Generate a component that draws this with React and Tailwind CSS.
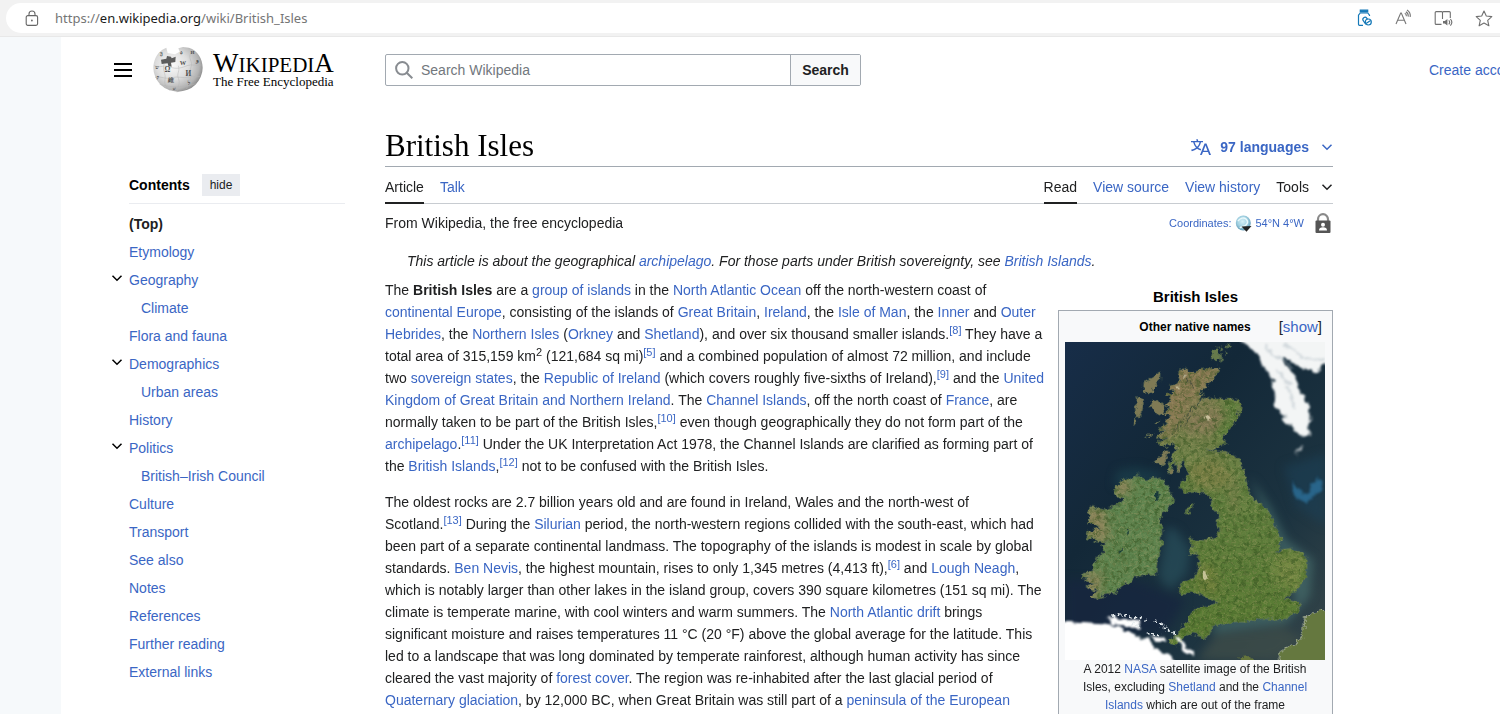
import { useState } from 'react';

const A = ({ children }) => (
  <a href="#" className="text-[#3a66c4] hover:underline">{children}</a>
);

// Keeps a footnote marker on the same line as the word before it
const Ref = ({ n, children }) => (
  <span className="whitespace-nowrap">
    {children}
    <sup className="relative -top-[5px] align-baseline text-[11px] leading-none">
      <a href="#" className="text-[#3a66c4]">[{n}]</a>
    </sup>
  </span>
);

const sections = [
  { title: 'Etymology' },
  { title: 'Geography', children: ['Climate'] },
  { title: 'Flora and fauna' },
  { title: 'Demographics', children: ['Urban areas'] },
  { title: 'History' },
  { title: 'Politics', children: ['British–Irish Council'] },
  { title: 'Culture' },
  { title: 'Transport' },
  { title: 'See also' },
  { title: 'Notes' },
  { title: 'References' },
  { title: 'Further reading' },
  { title: 'External links' },
];

const AddressBar = () => (
  <div className="h-[37px] bg-[#f2f2f2] border-b border-[#e8e8e8] pl-[6px] pt-[3px]">
    <div className="h-[30px] bg-white rounded-l-full rounded-r-md flex items-center pl-[19px] pr-[7px]">
      <LockIcon />
      <div
        role="textbox"
        aria-label="Address"
        contentEditable
        suppressContentEditableWarning
        className="ml-4 pt-px flex-1 outline-none font-['Noto_Sans','Open_Sans',sans-serif] text-[13px] text-[#757575]"
      >
        https://<span className="text-[#1a1a1a]">en.wikipedia.org</span>/wiki/British_Isles
      </div>
      <div className="flex items-center gap-[22px]">
        <button type="button" aria-label="Shopping"><BottleIcon /></button>
        <button type="button" aria-label="Read aloud"><ReadAloudIcon /></button>
        <button type="button" aria-label="Immersive reader"><ReaderIcon /></button>
        <button type="button" aria-label="Add to favorites"><StarIcon /></button>
      </div>
    </div>
  </div>
);

const Header = () => (
  <header className="h-[66px] flex items-center">
    <div className="w-[324px] shrink-0 pl-[53px] flex items-center">
      <button type="button" aria-label="Main menu"><MenuIcon /></button>
      <a href="#" className="ml-[21px] flex items-center gap-[10px] text-black font-['Liberation_Serif',serif]">
        <Globe />
        <span className="flex flex-col">
          <span className="text-[21px] leading-[22px] whitespace-nowrap">
            <span className="text-[27px] leading-[22px]">W</span>IKIPEDI<span className="text-[27px] leading-[22px]">A</span>
          </span>
          <span className="text-[13px] leading-[12px] whitespace-nowrap">The Free Encyclopedia</span>
        </span>
      </a>
    </div>
    <form className="flex-1 max-w-[476px] h-8 flex border border-[#a2a9b1] rounded-[2px]">
      <label className="flex-1 flex items-center pl-[9px] gap-2">
        <SearchIcon />
        <input
          type="search"
          aria-label="Search Wikipedia"
          placeholder="Search Wikipedia"
          className="flex-1 text-[14px] outline-none placeholder:text-[#72777d]"
        />
      </label>
      <button type="submit" className="w-[70px] border-l border-[#a2a9b1] bg-[#f8f9fa] text-[14px] font-bold text-[#202122]">
        Search
      </button>
    </form>
    <a href="#" className="ml-auto w-[71px] shrink-0 text-[14px] whitespace-nowrap text-[#3a66c4]">Create account</a>
  </header>
);

const Contents = () => {
  const [hidden, setHidden] = useState(false);
  return (
    <nav aria-label="Contents" className="w-[284px] shrink-0 pl-[50px] pt-[71px] text-[14px]">
      <div className="ml-[18px] h-[30px] border-b border-[#eaecf0] flex items-start gap-3">
        <h2 className="font-bold leading-[22px] text-black">Contents</h2>
        <button
          type="button"
          onClick={() => setHidden(!hidden)}
          className="h-[22px] px-2 bg-[#eaecf0] text-[12px] text-[#202122]"
        >
          hide
        </button>
      </div>
      {!hidden && (
        <ul className="pt-[6px] leading-[28px]">
          <li className="pl-[18px] font-bold"><a href="#" className="text-[#202122]">(Top)</a></li>
          {sections.map((s) => (
            <li key={s.title}>
              <div className="flex items-center">
                <span className="w-[18px] pb-1">
                  {s.children && (
                    <button type="button" aria-label={`Toggle ${s.title}`} className="block">
                      <Chevron />
                    </button>
                  )}
                </span>
                <A>{s.title}</A>
              </div>
              {s.children && (
                <ul className="pl-[30px]">
                  {s.children.map((c) => (
                    <li key={c}><A>{c}</A></li>
                  ))}
                </ul>
              )}
            </li>
          ))}
        </ul>
      )}
    </nav>
  );
};

const Tab = ({ active, children }) => (
  <a
    href="#"
    className={`-mb-px flex items-center border-b-2 pt-[5px] ${
      active ? 'border-[#202122] text-[#202122]' : 'border-transparent text-[#3a66c4]'
    }`}
  >
    {children}
  </a>
);

const Infobox = () => (
  <aside className="float-right ml-3 mt-[7px] w-[275px] text-center">
    <h2 className="text-[15px] leading-[22px] pb-[2px] font-bold text-black">British Isles</h2>
    <div className="border border-[#a2a9b1] bg-[#f8f9fa] pl-[6px] pr-[7px] pb-3">
      <div className="h-[31px] grid grid-cols-[1fr_auto_1fr] items-center">
        <span />
        <span className="text-[12px] font-bold text-black">Other native names</span>
        <span className="pr-[3px] text-right text-[15px]">
          [<button type="button" className="text-[#3a66c4]">show</button>]
        </span>
      </div>
      <SatelliteMap />
      <p className="px-2 text-[12px] leading-[18px]">
        A 2012 <A>NASA</A> satellite image of the British Isles, excluding <A>Shetland</A> and the{' '}
        <A>Channel Islands</A> which are out of the frame
      </p>
    </div>
  </aside>
);

const Article = () => (
  <main className="flex-1 min-w-0 ml-10 mr-[167px] pt-[22px] text-[14px] leading-[22px] text-[#202122]">
    <div className="h-[42px] border-b border-[#a2a9b1] flex items-center justify-between">
      <h1 className="font-['Liberation_Serif',serif] text-[31px] leading-[38px] text-black">British Isles</h1>
      <button type="button" className="flex items-center pt-[2px] font-bold text-[#3a66c4]">
        <LanguageIcon />
        <span className="ml-[9px] mr-3">97 languages</span>
        <Chevron />
      </button>
    </div>
    <div className="h-[37px] border-b border-[#c8ccd1] flex items-stretch gap-4">
      <Tab active>Article</Tab>
      <Tab>Talk</Tab>
      <div className="flex-1" />
      <Tab active>Read</Tab>
      <Tab>View source</Tab>
      <Tab>View history</Tab>
      <button type="button" className="flex items-center gap-3 pt-1">
        Tools <Chevron />
      </button>
    </div>

    <div className="pt-2 flex items-center justify-between">
      <p>From Wikipedia, the free encyclopedia</p>
      <div className="flex items-center text-[11px]">
        <A>Coordinates:</A>
        <span className="ml-1 mr-[3px]"><CoordGlobe /></span>
        <A>54°N 4°W</A>
        <span className="ml-[11px] mr-[2px]"><PadlockIcon /></span>
      </div>
    </div>

    <p className="mt-4 pl-[22px] italic">
      This article is about the geographical <A>archipelago</A>. For those parts under British sovereignty, see{' '}
      <A>British Islands</A>.
    </p>

    <div className="mt-[7px]">
      <Infobox />
      <p>
        The <b>British Isles</b> are a <A>group of islands</A> in the <A>North Atlantic Ocean</A> off the
        north-western coast of <A>continental Europe</A>, consisting of the islands of <A>Great Britain</A>,{' '}
        <A>Ireland</A>, the <A>Isle of Man</A>, the <A>Inner</A> and <A>Outer Hebrides</A>, the{' '}
        <A>Northern Isles</A> (<A>Orkney</A> and <A>Shetland</A>), and over six thousand
        smaller <Ref n={8}>islands.</Ref> They have a total area of 315,159 km
        <sup className="relative -top-[5px] align-baseline text-[11px] leading-none">2</sup> (121,684
        sq <Ref n={5}>mi)</Ref> and a combined population of almost 72 million, and include two{' '}
        <A>sovereign states</A>, the <A>Republic of Ireland</A> (which covers roughly five-sixths
        of <Ref n={9}>Ireland),</Ref> and the <A>United Kingdom of Great Britain and Northern Ireland</A>. The{' '}
        <A>Channel Islands</A>, off the north coast of <A>France</A>, are normally taken to be part of the
        British <Ref n={10}>Isles,</Ref> even though geographically they do not form part of
        the <Ref n={11}><A>archipelago</A>.</Ref> Under the UK Interpretation Act 1978, the Channel Islands are
        clarified as forming part of the <Ref n={12}><A>British Islands</A>,</Ref> not to be confused with the
        British Isles.
      </p>
      <p className="mt-[14px]">
        The oldest rocks are 2.7 billion years old and are found in Ireland, Wales and the north-west
        of <Ref n={13}>Scotland.</Ref> During the <A>Silurian</A> period, the north-western regions collided with
        the south-east, which had been part of a separate continental landmass. The topography of the
        islands is modest in scale by global standards. <A>Ben Nevis</A>, the highest mountain, rises to
        only 1,345 metres (4,413 <Ref n={6}>ft),</Ref> and <A>Lough Neagh</A>, which is notably larger than
        other lakes in the island group, covers 390 square kilometres (151 sq mi). The climate is
        temperate marine, with cool winters and warm summers. The <A>North Atlantic drift</A> brings
        significant moisture and raises temperatures 11 °C (20 °F) above the global average for the
        latitude. This led to a landscape that was long dominated by temperate rainforest, although human
        activity has since cleared the vast majority of <A>forest cover</A>. The region was re-inhabited
        after the last glacial period of <A>Quaternary glaciation</A>, by 12,000 BC, when Great Britain was
        still part of a <A>peninsula of the European</A>
      </p>
    </div>
  </main>
);

const App = () => (
  <div className="h-screen overflow-hidden bg-white font-['Liberation_Sans',Arial,sans-serif]">
    <AddressBar />
    <div className="flex min-h-full">
      <div className="w-[61px] shrink-0 bg-[#f6f9fb]" />
      <div className="flex-1 min-w-0">
        <Header />
        <div className="flex items-start">
          <Contents />
          <Article />
        </div>
      </div>
    </div>
  </div>
);

// Icons
const Chevron = () => (
  <svg className="w-3 h-3" viewBox="0 0 12 12" fill="none" stroke="currentColor" strokeWidth="1.5">
    <path d="M1.500 3.800L6 8.300l4.500-4.500" />
  </svg>
);
const MenuIcon = () => (
  <svg className="block w-[18px] h-[14px]" viewBox="0 0 18 14" fill="#000">
    <path d="M0 0h18v2H0zM0 6h18v2H0zM0 12h18v2H0z" />
  </svg>
);
const SearchIcon = () => (
  <svg className="w-[18px] h-[18px]" viewBox="0 0 18 18" fill="none" stroke="#888c91" strokeWidth="2">
    <circle cx="7.3" cy="7.3" r="6.2" />
    <path d="M11.700 11.700l5.600 5.600" />
  </svg>
);
const LockIcon = () => (
  <svg className="w-[14px] h-[17px]" viewBox="0 0 14 17" fill="none" stroke="#666" strokeWidth="1.1">
    <rect x="1.2" y="5.6" width="11.4" height="9.8" rx="1.6" />
    <path d="M4 5.6V4a3 3 0 0 1 6 0v1.6" />
    <circle cx="6.9" cy="10.5" r="0.9" fill="#666" stroke="none" />
  </svg>
);
const BottleIcon = () => (
  <svg className="w-[16px] h-[18px]" viewBox="0 0 16 18" fill="none" stroke="#1579b8" strokeWidth="1.2">
    <path d="M3.300 1.200h7.400v1.800H3.300z" fill="#1579b8" />
    <path d="M6 16.300H2.500a1 1 0 0 1-1-1V6.200L3.200 4h7.600l1.700 2.200v.8" />
    <rect x="6.800" y="8" width="4.200" height="7.500" rx="2.100" transform="rotate(-35 8.900 11.700)" />
    <circle cx="11.300" cy="13" r="3" fill="#fff" />
    <path d="M9 14.600l4.600-3.200" />
  </svg>
);
const ReadAloudIcon = () => (
  <svg className="w-[17px] h-[18px]" viewBox="0 0 17 18" fill="none" stroke="#777" strokeWidth="1.1">
    <path d="M1 15L5.700 4h.6L11 15M2.700 11.300h6.600" />
    <path d="M9.800 4.300a3 3 0 0 1 1.600 3M10.900 2.700a5 5 0 0 1 2.300 5M12 1a7 7 0 0 1 3.200 7" />
  </svg>
);
const ReaderIcon = () => (
  <svg className="w-[19px] h-[17px]" viewBox="0 0 19 17" fill="none" stroke="#707070" strokeWidth="1.1">
    <path d="M8.500 2.200V9M7.500 14.400H2.200a1 1 0 0 1-1-1V2.600a1 1 0 0 1 1-1h5.300a1 1 0 0 1 1 1 1 1 0 0 1 1-1h5.800a1 1 0 0 1 1 1V8" />
    <path d="M9 11h1.800l2.600-2v6.500l-2.600-2H9z" fill="#707070" stroke="none" />
    <path d="M14.800 10.300a3 3 0 0 1 0 4M16.400 9a5 5 0 0 1 0 6.600" />
  </svg>
);
const StarIcon = () => (
  <svg className="w-[18px] h-[17px]" viewBox="0 0 18 17" fill="none" stroke="#707070" strokeWidth="1.1" strokeLinejoin="round">
    <path d="M9 1l2.300 5 5.500.6-4.100 3.700 1.200 5.500L9 13l-4.900 2.800 1.200-5.500L1.200 6.600l5.500-.6z" />
  </svg>
);
const LanguageIcon = () => (
  <svg className="w-5 h-5" viewBox="0 0 20 20" fill="currentColor">
    <path d="M20 18h-1.440a.61.61 0 0 1-.4-.12.81.81 0 0 1-.23-.31L17 15h-5l-1 2.540a.77.77 0 0 1-.22.3.59.59 0 0 1-.4.14H9l4.550-11.470h1.890zm-3.530-4.310L14.890 9.500a11.620 11.620 0 0 1-.39-1.240q-.09.37-.19.69l-.19.56-1.580 4.190zm-6.300-1.580a13.430 13.430 0 0 1-2.910-1.410 11.460 11.460 0 0 0 2.810-5.370H12V4H7.310a4 4 0 0 0-.2-.56C6.870 2.790 6.600 2 6.600 2l-1.470.5s.4.89.6 1.500H0v1.330h2.150A11.230 11.230 0 0 0 5 10.700a17.190 17.190 0 0 1-5 2.100q.56.82.87 1.380a23.280 23.280 0 0 0 5.220-2.510 15.640 15.640 0 0 0 3.560 1.770zM3.630 5.330h4.910a8.110 8.110 0 0 1-2.450 4.450 9.110 9.110 0 0 1-2.460-4.450z" />
  </svg>
);
const CoordGlobe = () => (
  <svg className="w-[17px] h-[17px]" viewBox="0 0 17 17">
    <defs>
      <radialGradient id="coord" cx=".45" cy=".4" r=".6">
        <stop offset="0" stopColor="#d6f0f7" />
        <stop offset=".6" stopColor="#9fcfe0" />
        <stop offset="1" stopColor="#5f98b4" />
      </radialGradient>
    </defs>
    <circle cx="8.300" cy="8" r="7.500" fill="url(#coord)" />
    <path d="M3 6c2-3 6-4 8-2s2 4 0 6-5 1-6 3" fill="none" stroke="#e9f8fb" strokeWidth="1.500" />
    <path d="M6.500 11.500l10-.5-5 5.700z" fill="#222" />
  </svg>
);
const PadlockIcon = () => (
  <svg className="w-[16px] h-[20px]" viewBox="0 0 16 20">
    <path d="M3 9V6.200a5 5 0 0 1 10 0V9" fill="none" stroke="#8a8a8a" strokeWidth="2.200" />
    <rect x="0.500" y="7.500" width="15" height="12.500" rx="1" fill="#555" />
    <circle cx="8" cy="11.800" r="2" fill="#fff" />
    <path d="M4 17.500c0-2.600 1.500-3.300 4-3.300s4 .7 4 3.300z" fill="#fff" />
  </svg>
);

const Globe = () => (
  <svg className="w-[50px] h-[46px]" viewBox="0 0 150 138">
    <defs>
      <radialGradient id="ball" cx=".38" cy=".4" r=".65">
        <stop offset="0" stopColor="#fafafa" />
        <stop offset=".5" stopColor="#dedede" />
        <stop offset=".85" stopColor="#b3b3b3" />
        <stop offset="1" stopColor="#8a8a8a" />
      </radialGradient>
    </defs>
    <path d="M28 8l12-6 4 16 22 4 14-8-4-10 14-4 18 2c26 8 41 34 41 60a74 72 0 0 1-148 0C1 42 10 20 28 8z" fill="url(#ball)" />
    <path d="M24 38l16-3 2-8 12 2 2 5 12-5-1 16-13 2 2 12-10-2-2-8-18 2z" fill="#5c5c5c" />
    <g fill="none" stroke="#b5b5b5" strokeWidth="1.500">
      <path d="M4 56c20 8 30-4 48 4s36 2 50-4 30 2 44-2M6 92c18-6 30 6 50 0s36 4 52-2 24 2 34-2" />
      <path d="M34 50c-8 20 6 30 2 48s8 24 16 34M76 56c6 16-6 24 0 38s0 24-4 42M112 20c-6 18 8 22 2 40s6 26-4 42-4 16-10 24M20 112c30 10 70 10 110-2" />
    </g>
    <g fill="#505050" fontFamily="Liberation Serif, serif" fontWeight="bold" fontSize="22" textAnchor="middle">
      <text x="43" y="74">Ω</text>
      <text x="90" y="53" fontSize="19">W</text>
      <text x="106" y="88">И</text>
      <text x="53" y="106" fontSize="17">維</text>
      <text x="84" y="22" fontSize="16">ა</text>
      <text x="118" y="22" fontSize="15">Й</text>
      <text x="134" y="46" fontSize="17">و</text>
      <text x="12" y="66" fontSize="15">ש</text>
      <text x="14" y="96" fontSize="14">ק</text>
      <text x="108" y="114" fontSize="16">ל</text>
      <text x="64" y="130" fontSize="13">ש</text>
      <text x="26" y="24" fontSize="14">უ</text>
    </g>
  </svg>
);

// Coastlines, roughened with turbulence so they read as a photo from orbit
const BRITAIN =
  'M395 266L412 272 430 274 460 268 503 264 500 285 480 308 455 326 445 340 463 345 440 372 470 356 510 354 565 358 574 374 560 420 540 445 515 475 528 492 500 502 470 512 520 514 555 525 575 550 583 575 590 605 597 635 615 660 650 690 664 710 680 745 695 780 688 806 672 820 705 810 735 808 760 820 772 850 766 890 750 915 730 940 700 955 740 963 752 975 735 1000 690 1022 640 1015 600 1025 560 1022 520 1030 490 1038 472 1075 440 1065 420 1060 395 1080 380 1095 358 1090 360 1080 385 1062 405 1030 420 1005 435 985 470 978 505 968 490 962 460 950 440 938 400 943 385 930 395 910 430 895 445 870 447 840 440 820 415 826 432 800 415 772 435 780 470 782 500 770 510 750 500 735 510 700 490 690 483 660 470 640 440 635 405 640 390 622 398 604 418 585 408 560 402 535 392 548 392 565 380 572 376 545 366 565 355 582 358 550 372 515 380 500 362 490 340 500 328 488 358 470 322 478 330 460 355 450 328 452 335 440 360 430 345 425 365 405 345 402 362 385 345 378 365 360 350 345 375 338 355 318 380 315 390 300 385 285z';
const IRELAND =
  'M265 583L290 600 325 592 345 610 358 628 352 640 368 645 370 670 345 692 330 715 335 750 335 790 325 830 320 880 290 884 255 892 230 910 190 940 165 945 140 957 122 948 150 928 130 932 105 920 140 908 100 902 132 892 95 895 100 880 130 880 125 850 150 842 135 838 165 820 155 800 172 785 140 782 110 775 115 755 150 745 135 735 112 725 125 710 110 695 130 680 160 690 190 682 220 660 190 642 195 620 225 595 245 600 250 590z';

const SatelliteMap = () => (
  <svg
    role="img"
    aria-label="Satellite image of the British Isles"
    className="block w-full"
    viewBox="45 186 780 954"
    preserveAspectRatio="xMidYMid slice"
  >
    <defs>
      <linearGradient id="sea" x1="0" y1="0" x2="1" y2="1">
        <stop offset="0" stopColor="#172d48" />
        <stop offset=".35" stopColor="#132838" />
        <stop offset=".7" stopColor="#1c3340" />
        <stop offset="1" stopColor="#37474a" />
      </linearGradient>
      <linearGradient id="land" x1="0" y1="0" x2="0" y2="1">
        <stop offset="0" stopColor="#857b56" />
        <stop offset=".24" stopColor="#77804d" />
        <stop offset=".4" stopColor="#628041" />
        <stop offset="1" stopColor="#587b32" />
      </linearGradient>
      <filter id="coast" x="-5%" y="-5%" width="110%" height="110%" colorInterpolationFilters="sRGB">
        <feTurbulence type="fractalNoise" baseFrequency=".06" numOctaves="4" seed="4" />
        <feDisplacementMap in="SourceGraphic" scale="22" xChannelSelector="R" yChannelSelector="G" />
      </filter>
      <filter id="cloud" x="-20%" y="-20%" width="140%" height="140%" colorInterpolationFilters="sRGB">
        <feTurbulence type="fractalNoise" baseFrequency=".03" numOctaves="5" seed="9" />
        <feDisplacementMap in="SourceGraphic" scale="32" xChannelSelector="R" yChannelSelector="G" />
        <feGaussianBlur stdDeviation="3" />
      </filter>
      <filter id="soft" x="-50%" y="-50%" width="200%" height="200%" colorInterpolationFilters="sRGB">
        <feGaussianBlur stdDeviation="14" />
      </filter>
      <filter id="speckle" x="0" y="0" width="100%" height="100%" colorInterpolationFilters="sRGB">
        <feTurbulence type="fractalNoise" baseFrequency=".16" numOctaves="3" seed="2" />
        <feColorMatrix values="0 0 0 0 .66  0 0 0 0 .62  0 0 0 0 .42  4 0 0 0 -1.900" />
      </filter>
      <filter id="shade" x="0" y="0" width="100%" height="100%" colorInterpolationFilters="sRGB">
        <feTurbulence type="fractalNoise" baseFrequency=".08" numOctaves="4" seed="7" />
        <feColorMatrix values="0 0 0 0 .2  0 0 0 0 .32  0 0 0 0 .12  0 3 0 0 -1.300" />
      </filter>
      <clipPath id="isles">
        <path d={BRITAIN} />
        <path d={IRELAND} />
      </clipPath>
    </defs>

    <rect x="45" y="186" width="780" height="954" fill="url(#sea)" />

    <g filter="url(#soft)">
      <path d="M350 740l30 10 40 60-10 70-50 50-35-40z" fill="#2b5560" opacity=".6" />
      <path d="M600 590l60 90 50 100 80 60-10 110-70 80-230 30 20-40 240-50z" fill="#4d7673" opacity=".6" />
      <path d="M700 560l130-40v220l-90-60z" fill="#1c3f55" opacity=".6" />
      <path d="M500 1060l200-20 60 40-80 60H440z" fill="#3d4c49" opacity=".8" />
      <path d="M45 900h200l160 60-60 100-300 10z" fill="#17253f" opacity=".8" />
      <path d="M200 570l60-10 80 20-20 30-130 10z" fill="#20505a" opacity=".4" />
    </g>
    <path d="M728 600l14 25 18 22 22-12-8-25 22-12 24 0 0 30-30 22-20 18-26-4-18-22z" fill="#2f78a5" opacity=".7" filter="url(#cloud)" />

    <g filter="url(#coast)">
      <path d={BRITAIN} fill="url(#land)" stroke="#71855c" strokeWidth="2" />
      <path d={IRELAND} fill="#5f8550" stroke="#71855c" strokeWidth="2" />
      <g clipPath="url(#isles)">
        <g filter="url(#soft)">
          <path d="M395 260l110 0-60 85-60 90-60 60 20-160z" fill="#8b7a55" />
          <path d="M420 400l80-10 50 0-30 60-90 10-30-20z" fill="#857956" />
          <path d="M500 355h80l-20 80-40 60-30-30 40-60z" fill="#5b7f3c" />
          <path d="M405 560l90-25 60 50-40 45-80-10z" fill="#8a8049" opacity=".6" />
          <path d="M540 590l25 0 0 120-25-20z" fill="#7f8050" opacity=".7" />
          <path d="M440 860l50-10 20 90-60 0z" fill="#85863f" opacity=".5" />
          <path d="M100 680l60 0 20 100-70 10zM100 880l60 0-20 80-50 0zM190 600l50-10 0 50-50 10z" fill="#8b845b" />
          <path d="M680 820l90 10-30 100-70-30z" fill="#748943" />
        </g>
        <rect x="45" y="186" width="780" height="954" filter="url(#speckle)" opacity=".4" />
        <rect x="45" y="186" width="780" height="954" filter="url(#shade)" opacity=".6" />
      </g>
      <g fill="#7f7a55" stroke="#71855c" strokeWidth="1">
        <path d="M330 278l-2 30-30 35-20-10 5-28 22-12z" />
        <path d="M263 352l15 5-4 40-12 20-4-40zM255 420l8 5-12 16z" />
        <path d="M312 355l12 15 14-2 6 30-18 10-14-18-12-8z" />
        <path d="M350 505l6 15-16 35-16-2-8-12 16-10zM385 545l6 22-10 12zM360 560l6 12-4 14-8-6zM312 458l-10 10-14 4zM330 420l-14 6 0 6zM315 545l18-4 6 15-16 0z" />
        <path d="M432 672l-6 18-14 15-4-8 10-18z" fill="#688143" />
        <path d="M488 214l14-2 8 8 2 16-8 10-8-2-12-8zM512 200l8 4-4 8zM530 194l8 2-5 10zM500 200l6 2-3 5zM524 216l8 3-4 6zM512 232l8 2-2 12z" fill="#667a4b" />
      </g>
      <path d="M314 640l12 0 2 18-14 6zM230 745l8 5-4 20zM205 810l10-6 0 12z" fill="#193a3a" />
      <path d="M840 985l-48 14-28 12-4 52-26 30-34 14-25 50h180z" fill="#65783f" stroke="#a9b19a" strokeWidth="3" />
      <path d="M565 1132l35-4 5 25h-36z" fill="#65753c" />
    </g>
    <path d="M428 322l-26-36M452 358l-90 105M420 410l-45 60" stroke="#26382f" strokeWidth="2" fill="none" filter="url(#coast)" />
    <path d="M463 412l10-4 12 6-14 5zM398 290l8-4 2 8zM378 320l8-2-2 8zM458 870l8 4 6 20-8 8z" fill="#e2d9b6" opacity=".75" filter="url(#coast)" />

    <g fill="#f3f5f5" filter="url(#cloud)">
      <path d="M550 150h320v120l-45-8-44 14-50-32-32-14 4 28 34 26 20 52 22 70 4 64-34-4-44-42-28-60-6-60-32-50-24-38-54-34z" />
      <path d="M754 490l4 18-14 20-2-20z" opacity=".6" />
    </g>
    <path d="M640 200l50 30 40 40M700 195l60 40 60 10M680 260l40 60M710 330l30 60" stroke="#aebac2" strokeWidth="8" fill="none" opacity=".5" filter="url(#cloud)" />
    <g fill="#fff" filter="url(#cloud)">
      <path d="M0 1020l100 6 80 6 60 25 60 30 60 40 60 60H0z" />
      <path d="M170 1012l50 2 50 18 0 18-80-18zM300 1065l40 5 10 14-30-2zM375 1068l28 20 30 44-40-28z" />
    </g>
    <path d="M190 1004l50 4 30 12M270 1010l20 10M315 1020l20 14 24 18 20 14M230 1020l40 20M290 1060l40 10" stroke="#e8eef0" strokeWidth="6" strokeDasharray="9 7" fill="none" filter="url(#coast)" />
  </svg>
);

export default App;
